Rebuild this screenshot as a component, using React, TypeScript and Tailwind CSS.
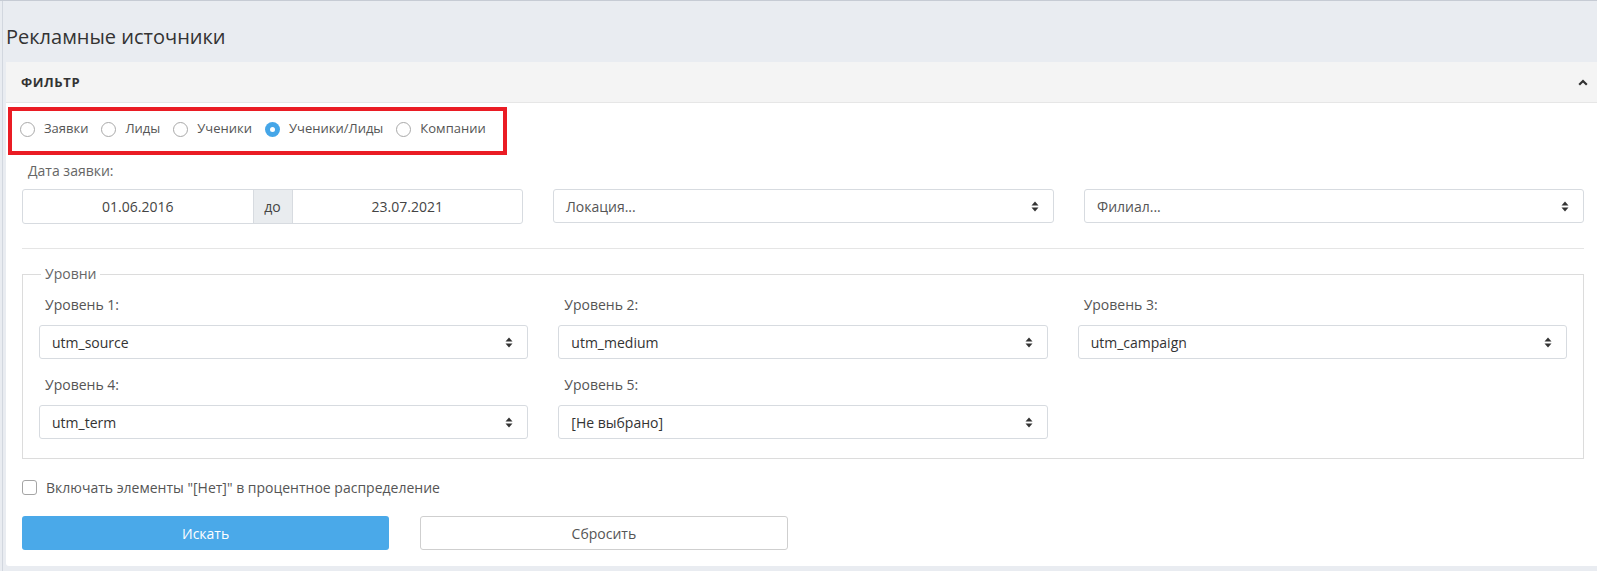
import React, { useState } from 'react'

const SortIcon = () => (
  <svg width="8" height="11" viewBox="0 0 8 11" className="shrink-0">
    <path d="M4 0.5 L7.5 4.5 H0.5 Z" fill="#333" />
    <path d="M4 10.5 L7.5 6.5 H0.5 Z" fill="#333" />
  </svg>
)

const Select = ({ value, muted }: { value: string; muted?: boolean }) => (
  <div className="h-[34px] flex items-center justify-between border border-[#d7dbe0] rounded-[3px] bg-white pl-[12px] pr-[14px]">
    <span className={muted ? 'text-[14px] text-[#555]' : 'text-[14px] text-[#333]'}>{value}</span>
    <SortIcon />
  </div>
)

const Radio = ({ label, checked, onClick }: { label: string; checked: boolean; onClick: () => void }) => (
  <div className="flex items-center gap-[9px] cursor-pointer" onClick={onClick}>
    {checked ? (
      <span className="w-[15px] h-[15px] rounded-full bg-[#45a6e8] flex items-center justify-center">
        <span className="w-[5px] h-[5px] rounded-full bg-white" />
      </span>
    ) : (
      <span className="w-[15px] h-[15px] rounded-full border border-[#a9a9a9] bg-white" />
    )}
    <span className="text-[13px] text-[#555]">{label}</span>
  </div>
)

const levels = [
  { label: 'Уровень 1:', value: 'utm_source' },
  { label: 'Уровень 2:', value: 'utm_medium' },
  { label: 'Уровень 3:', value: 'utm_campaign' },
  { label: 'Уровень 4:', value: 'utm_term' },
  { label: 'Уровень 5:', value: '[Не выбрано]' },
]

const App = () => {
  const [mode, setMode] = useState('Ученики/Лиды')
  const modes = ['Заявки', 'Лиды', 'Ученики', 'Ученики/Лиды', 'Компании']

  return (
    <div className="w-[1597px] h-[571px] overflow-hidden bg-[#e9ecf1] border-t border-[#c6cbd4] pl-[2px] font-['Open_Sans',sans-serif]">
      <div className="h-full border-l border-[#d2d7df] pl-[3px]">
        <h1 className="h-[61px] pt-[22px] text-[20px] leading-[28px] text-[#333] font-normal">Рекламные источники</h1>

        <div className="w-[1594px] bg-white rounded-b-[3px]">
          <div className="h-[41px] bg-[#f4f4f4] border-b border-[#e6e6e6] flex items-center justify-between pl-[15px] pr-[12px]">
            <span className="text-[13px] font-bold text-[#333] tracking-[0.6px] pt-[1px]">ФИЛЬТР</span>
            <svg width="10" height="7" viewBox="0 0 10 7">
              <path d="M1.2 5.8 L5 2 L8.8 5.8" stroke="#333" strokeWidth="2.2" fill="none" />
            </svg>
          </div>

          <div className="px-[16px] pt-[4px] pb-[16px]">
            {/* radio group */}
            <div className="-ml-[14px] w-[499px] h-[48px] border-4 border-[#ea1c24] flex items-center gap-[13px] pl-[8px] pb-[4px]">
              {modes.map((m) => (
                <Radio key={m} label={m} checked={mode === m} onClick={() => setMode(m)} />
              ))}
            </div>

            <div className="mt-[6px] pl-[6px] text-[14px] leading-[20px] text-[#666]">Дата заявки:</div>
            <div className="mt-[8px] flex">
              <div className="w-[501px] h-[35px] flex border border-[#d7dbe0] rounded-[3px] text-[14px] text-[#444]">
                <div className="flex-1 flex items-center justify-center">01.06.2016</div>
                <div className="w-[40px] flex items-center justify-center bg-[#e9ecef] border-x border-[#d7dbe0]">до</div>
                <div className="flex-1 flex items-center justify-center">23.07.2021</div>
              </div>
              <div className="w-[501px] ml-[30px]">
                <Select value="Локация..." muted />
              </div>
              <div className="flex-1 ml-[30px]">
                <Select value="Филиал..." muted />
              </div>
            </div>

            <div className="mt-[24px] border-t border-[#e5e5e5]" />

            <fieldset className="mt-[15px] border border-[#dcdcdc] px-[16px] pb-[19px]">
              <legend className="ml-[2px] px-[4px] text-[14px] leading-[20px] text-[#666]">Уровни</legend>
              <div className="pt-[11px] grid grid-cols-3 gap-x-[30px] gap-y-[16px]">
                {levels.map((l) => (
                  <div key={l.label}>
                    <div className="pl-[6px] text-[14px] leading-[20px] text-[#555]">{l.label}</div>
                    <div className="mt-[10px]">
                      <Select value={l.value} />
                    </div>
                  </div>
                ))}
              </div>
            </fieldset>

            <div className="mt-[18px] h-[20px] flex items-center gap-[9px]">
              <span className="w-[15px] h-[15px] rounded-[3px] border border-[#a5a5a5] bg-white" />
              <span className="text-[14px] text-[#555]">Включать элементы "[Нет]" в процентное распределение</span>
            </div>

            <div className="mt-[19px] grid grid-cols-4 gap-[31px]">
              <button className="h-[34px] rounded-[3px] bg-[#4aa9e9] text-white text-[14px]">Искать</button>
              <button className="h-[34px] rounded-[3px] bg-white border border-[#cfcfcf] text-[#555] text-[14px]">Сбросить</button>
            </div>
          </div>
        </div>
      </div>
    </div>
  )
}

export default App
